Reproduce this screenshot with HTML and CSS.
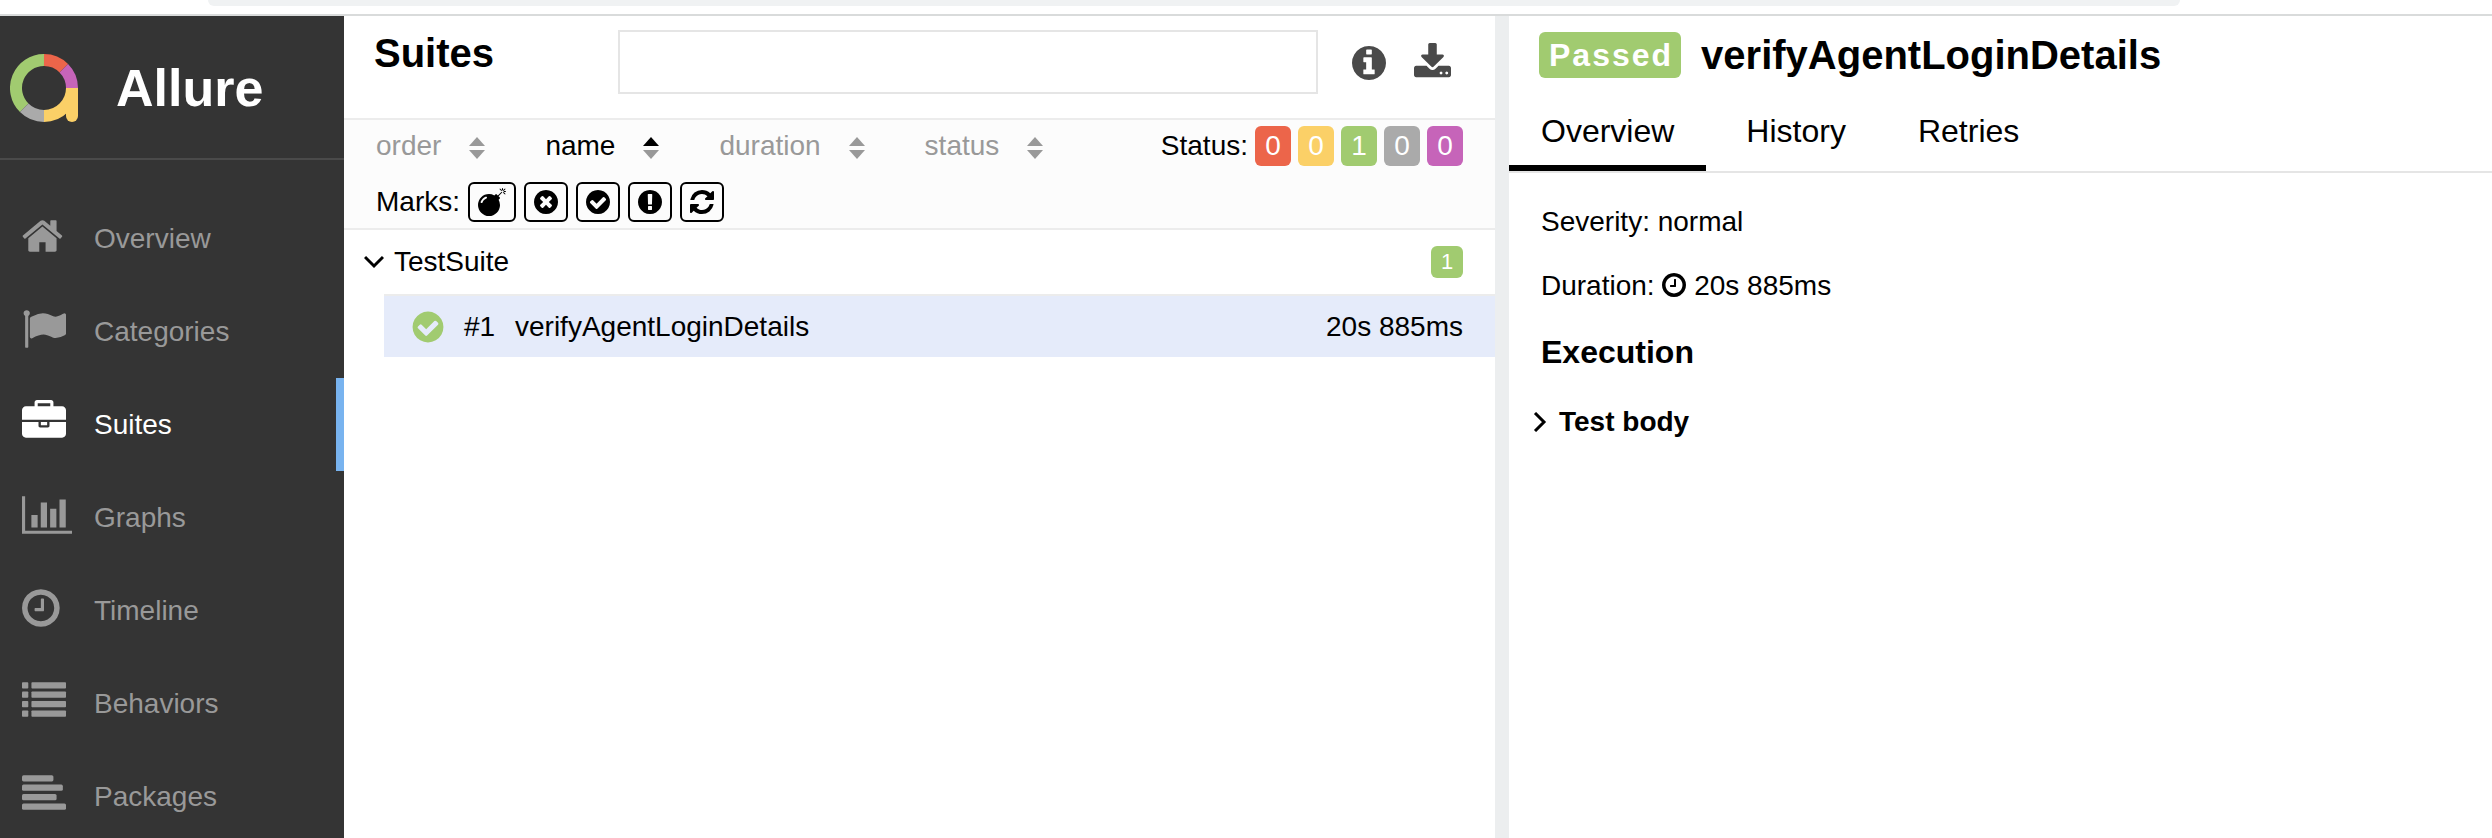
FILE: index.html
```html
<!DOCTYPE html>
<html lang="en">
<head>
  <meta charset="UTF-8" />
  <meta name="viewport" content="width=device-width, initial-scale=1" />
  <title>Allure Report</title>
  <link rel="stylesheet" href="styles.css">
</head>
<body>
  <svg class="sprite" aria-hidden="true">
    <symbol id="i-home" viewBox="64 0 1792 1792" preserveAspectRatio="xMinYMid"><path d="M1472 992v480q0 26-19 45t-45 19h-384v-384h-256v384h-384q-26 0-45-19t-19-45v-480q0-1 .5-3t.5-3l575-474 575 474q1 2 1 6zm223-69l-62 74q-8 9-21 11h-3q-13 0-21-7l-692-577-692 577q-12 8-24 7-13-2-21-11l-62-74q-8-10-7-23.5t11-21.5l719-599q32-26 76-26t76 26l244 204v-195q0-14 9-23t23-9h192q14 0 23 9t9 23v408l219 182q10 8 11 21.5t-7 23.5z"/></symbol>
    <symbol id="i-flag" viewBox="0 0 1792 1792" preserveAspectRatio="xMinYMid"><path d="M320 256q0 72-64 110v1266q0 13-9.5 22.5t-22.5 9.5h-64q-13 0-22.5-9.5t-9.5-22.5v-1266q-64-38-64-110 0-53 37.5-90.5t90.5-37.5 90.5 37.5 37.5 90.5zm1472 64v763q0 25-12.5 38.5t-39.5 27.5q-215 116-369 116-61 0-123.5-22t-108.5-48-115.5-48-142.5-22q-192 0-464 146-17 9-33 9-26 0-45-19t-19-45v-742q0-32 31-55 21-14 79-43 236-120 421-120 107 0 200 29t219 88q38 19 88 19 54 0 117.5-21t110-47 88-47 54.5-21q26 0 45 19t19 45z"/></symbol>
    <symbol id="i-briefcase" viewBox="0 0 1792 1792" preserveAspectRatio="xMinYMid"><path d="M640 256h512v-128h-512v128zm1152 640v480q0 66-47 113t-113 47h-1472q-66 0-113-47t-47-113v-480h672v160q0 26 19 45t45 19h320q26 0 45-19t19-45v-160h672zm-768 0v128h-256v-128h256zm768-480v384h-1792v-384q0-66 47-113t113-47h352v-160q0-40 28-68t68-28h576q40 0 68 28t28 68v160h352q66 0 113 47t47 113z"/></symbol>
    <symbol id="i-chart" viewBox="0 0 2048 1792" preserveAspectRatio="xMinYMid"><path d="M640 896v512h-256v-512h256zm384-512v1024h-256v-1024h256zm1024 1152v128h-2048v-1536h128v1408h1920zm-640-896v768h-256v-768h256zm384-384v1152h-256v-1152h256z"/></symbol>
    <symbol id="i-clock" viewBox="128 0 1536 1792" preserveAspectRatio="xMinYMid"><path d="M1024 544v448q0 14-9 23t-23 9h-320q-14 0-23-9t-9-23v-64q0-14 9-23t23-9h224v-352q0-14 9-23t23-9h64q14 0 23 9t9 23zm416 352q0-148-73-273t-198-198-273-73-273 73-198 198-73 273 73 273 198 198 273 73 273-73 198-198 73-273zm224 0q0 209-103 385.5t-279.5 279.5-385.5 103-385.5-103-279.5-279.5-103-385.5 103-385.5 279.5-279.5 385.5-103 385.5 103 279.5 279.5 103 385.5z"/></symbol>
    <symbol id="i-list" viewBox="0 0 1792 1792" preserveAspectRatio="xMinYMid">
      <rect x="0" y="128" width="256" height="256" rx="32"/><rect x="384" y="128" width="1408" height="256" rx="32"/>
      <rect x="0" y="512" width="256" height="256" rx="32"/><rect x="384" y="512" width="1408" height="256" rx="32"/>
      <rect x="0" y="896" width="256" height="256" rx="32"/><rect x="384" y="896" width="1408" height="256" rx="32"/>
      <rect x="0" y="1280" width="256" height="256" rx="32"/><rect x="384" y="1280" width="1408" height="256" rx="32"/>
    </symbol>
    <symbol id="i-align" viewBox="0 0 1792 1792" preserveAspectRatio="xMinYMid">
      <rect x="0" y="128" width="1280" height="256" rx="64"/>
      <rect x="0" y="512" width="1664" height="256" rx="64"/>
      <rect x="0" y="896" width="1408" height="256" rx="64"/>
      <rect x="0" y="1280" width="1792" height="256" rx="64"/>
    </symbol>
    <symbol id="i-info" viewBox="128 0 1536 1792"><path d="M1152 1376v-160q0-14-9-23t-23-9h-96v-512q0-14-9-23t-23-9h-320q-14 0-23 9t-9 23v160q0 14 9 23t23 9h96v320h-96q-14 0-23 9t-9 23v160q0 14 9 23t23 9h448q14 0 23-9t9-23zm-128-896v-160q0-14-9-23t-23-9h-192q-14 0-23 9t-9 23v160q0 14 9 23t23 9h192q14 0 23-9t9-23zm640 416q0 209-103 385.5t-279.5 279.5-385.5 103-385.5-103-279.5-279.5-103-385.5 103-385.5 279.5-279.5 385.5-103 385.5 103 279.5 279.5 103 385.5z"/></symbol>
    <symbol id="i-download" viewBox="64 0 1664 1792"><path d="M1344 1344q0-26-19-45t-45-19-45 19-19 45 19 45 45 19 45-19 19-45zm256 0q0-26-19-45t-45-19-45 19-19 45 19 45 45 19 45-19 19-45zm128-224v320q0 40-28 68t-68 28h-1472q-40 0-68-28t-28-68v-320q0-40 28-68t68-28h465l135 136q58 56 136 56t136-56l136-136h464q40 0 68 28t28 68zm-325-569q17 41-14 70l-448 448q-18 19-45 19t-45-19l-448-448q-31-29-14-70 17-39 59-39h256v-448q0-26 19-45t45-19h256q26 0 45 19t19 45v448h256q42 0 59 39z"/></symbol>
    <symbol id="i-bomb" viewBox="0 0 1792 1792"><path d="M571 589q-10-25-34-35t-49 0q-108 44-191 127t-127 191q-10 25 0 49t35 34q13 5 24 5 42 0 60-40 34-84 98.5-148.5t148.5-98.5q25-11 35-35t0-49zm942-356l46 46-244 243 68 68q19 19 19 45.5t-19 45.5l-64 64q89 161 89 343 0 143-55.5 273.5t-150 225-225 150-273.5 55.5-273.5-55.5-225-150-150-225-55.5-273.5 55.5-273.5 150-225 225-150 273.5-55.5q182 0 343 89l64-64q19-19 45.5-19t45.5 19l68 68zm8-56q-10 10-22 10-13 0-23-10l-91-90q-9-10-9-23t9-23q10-9 23-9t23 9l90 91q10 9 10 22.5t-10 22.5zm230 230q-11 9-23 9t-23-9l-90-91q-10-9-10-22.5t10-22.5q9-10 22.5-10t22.5 10l91 90q9 10 9 23t-9 23zm41-183q0 14-9 23t-23 9h-96q-14 0-23-9t-9-23 9-23 23-9h96q14 0 23 9t9 23zm-192-192v96q0 14-9 23t-23 9-23-9-9-23v-96q0-14 9-23t23-9 23 9 9 23zm151 55l-91 90q-10 10-22 10-13 0-23-10-10-9-10-22.5t10-22.5l90-91q10-9 23-9t23 9q9 10 9 23t-9 23z"/></symbol>
    <symbol id="i-times" viewBox="128 0 1536 1792"><path d="M1277 1122q0-26-19-45l-181-181 181-181q19-19 19-45 0-27-19-46l-90-90q-19-19-46-19-26 0-45 19l-181 181-181-181q-19-19-45-19-27 0-46 19l-90 90q-19 19-19 46 0 26 19 45l181 181-181 181q-19 19-19 45 0 27 19 46l90 90q19 19 46 19 26 0 45-19l181-181 181 181q19 19 45 19 27 0 46-19l90-90q19-19 19-46zm387-226q0 209-103 385.5t-279.5 279.5-385.5 103-385.5-103-279.5-279.5-103-385.5 103-385.5 279.5-279.5 385.5-103 385.5 103 279.5 279.5 103 385.5z"/></symbol>
    <symbol id="i-check" viewBox="128 0 1536 1792"><path d="M1412 734q0-28-18-46l-91-90q-19-19-45-19t-45 19l-408 407-226-226q-19-19-45-19t-45 19l-91 90q-18 18-18 46 0 27 18 45l362 362q19 19 45 19 27 0 46-19l543-543q18-18 18-45zm252 162q0 209-103 385.5t-279.5 279.5-385.5 103-385.5-103-279.5-279.5-103-385.5 103-385.5 279.5-279.5 385.5-103 385.5 103 279.5 279.5 103 385.5z"/></symbol>
    <symbol id="i-exclamation" viewBox="128 0 1536 1792"><path d="M896 128q209 0 385.5 103t279.5 279.5 103 385.5-103 385.5-279.5 279.5-385.5 103-385.5-103-279.5-279.5-103-385.5 103-385.5 279.5-279.5 385.5-103zm128 1247v-190q0-14-9-23.5t-22-9.5h-192q-13 0-23 10t-10 23v190q0 13 10 23t23 10h192q13 0 22-9.5t9-23.5zm-2-344l18-621q0-12-10-18-10-8-24-8h-220q-14 0-24 8-10 6-10 18l17 621q0 10 10 17.5t24 7.5h185q14 0 23.5-7.5t10.5-17.5z"/></symbol>
    <symbol id="i-refresh" viewBox="128 0 1536 1792"><path d="M1639 1056q0 5-1 7-64 268-268 434.5t-478 166.5q-146 0-282.5-55t-243.5-157l-129 129q-19 19-45 19t-45-19-19-45v-448q0-26 19-45t45-19h448q26 0 45 19t19 45-19 45l-137 137q71 66 161 102t187 36q134 0 250-65t186-179q11-17 53-117 8-23 30-23h192q13 0 22.5 9.5t9.5 22.5zm25-800v448q0 26-19 45t-45 19h-448q-26 0-45-19t-19-45 19-45l138-138q-148-137-349-137-134 0-250 65t-186 179q-11 17-53 117-8 23-30 23h-199q-13 0-22.5-9.5t-9.5-22.5v-7q65-268 270-434.5t480-166.5q146 0 284 55.5t245 156.5l130-129q19-19 45-19t45 19 19 45z"/></symbol>
    <symbol id="i-down" viewBox="0 0 20 14"><path d="M1 2l9 9 9-9" fill="none" stroke="currentColor" stroke-width="3"/></symbol>
    <symbol id="i-right" viewBox="0 0 14 20"><path d="M2 1l9 9-9 9" fill="none" stroke="currentColor" stroke-width="3"/></symbol>
  </svg>

  <div class="topbar"><div class="address"></div></div>

  <div class="app">
    <aside class="side-nav">
      <a class="brand" href="#">
        <svg class="logo" viewBox="0 0 68 68" stroke-width="12" aria-hidden="true">
          <path d="M34 6A28 28 0 0 0 14.2 53.8" stroke="#a1cb70"/>
          <path d="M14.2 53.8A28 28 0 0 0 34 62" stroke="#aaa"/>
          <path d="M34 62A28 28 0 0 0 62 34" stroke="#fbd067"/>
          <path d="M56 34h12v28a6 6 0 0 1-12 0z" fill="#fbd067" stroke="none"/>
          <path d="M34 6A28 28 0 0 1 53.8 14.2" stroke="#ec654a"/>
          <path d="M53.8 14.2A28 28 0 0 1 62 34" stroke="#c664b9"/>
        </svg>
        <span>Allure</span>
      </a>
      <nav class="menu">
        <a class="menu-item" href="#overview"><svg class="menu-icon"><use href="#i-home"/></svg>Overview</a>
        <a class="menu-item" href="#categories"><svg class="menu-icon"><use href="#i-flag"/></svg>Categories</a>
        <a class="menu-item active" href="#suites"><svg class="menu-icon"><use href="#i-briefcase"/></svg>Suites</a>
        <a class="menu-item" href="#graphs"><svg class="menu-icon"><use href="#i-chart"/></svg>Graphs</a>
        <a class="menu-item" href="#timeline"><svg class="menu-icon"><use href="#i-clock"/></svg>Timeline</a>
        <a class="menu-item" href="#behaviors"><svg class="menu-icon"><use href="#i-list"/></svg>Behaviors</a>
        <a class="menu-item" href="#packages"><svg class="menu-icon"><use href="#i-align"/></svg>Packages</a>
      </nav>
    </aside>

    <main class="pane">
      <header class="pane-header">
        <h1>Suites</h1>
        <input class="search" type="text" aria-label="Search">
        <div class="tools">
          <button class="tool" aria-label="Info"><svg class="icon-info"><use href="#i-info"/></svg></button>
          <button class="tool" aria-label="Download CSV"><svg class="icon-download"><use href="#i-download"/></svg></button>
        </div>
      </header>

      <section class="filters">
        <div class="filter-row">
          <div class="sorters">
            <button class="sorter">order<svg class="sort" viewBox="0 0 16 22"><path d="M0 9l8-9 8 9z"/><path d="M0 13h16l-8 9z"/></svg></button>
            <button class="sorter sorted">name<svg class="sort" viewBox="0 0 16 22"><path class="asc" d="M0 9l8-9 8 9z"/><path d="M0 13h16l-8 9z"/></svg></button>
            <button class="sorter">duration<svg class="sort" viewBox="0 0 16 22"><path d="M0 9l8-9 8 9z"/><path d="M0 13h16l-8 9z"/></svg></button>
            <button class="sorter">status<svg class="sort" viewBox="0 0 16 22"><path d="M0 9l8-9 8 9z"/><path d="M0 13h16l-8 9z"/></svg></button>
          </div>
          <div class="statuses">
            <span>Status:</span>
            <button class="chip failed">0</button>
            <button class="chip broken">0</button>
            <button class="chip passed">1</button>
            <button class="chip skipped">0</button>
            <button class="chip unknown">0</button>
          </div>
        </div>
        <div class="marks">
          <span>Marks:</span>
          <button class="mark" aria-label="Flaky"><svg class="icon-bomb"><use href="#i-bomb"/></svg></button>
          <button class="mark" aria-label="New failed"><svg><use href="#i-times"/></svg></button>
          <button class="mark" aria-label="New passed"><svg><use href="#i-check"/></svg></button>
          <button class="mark" aria-label="New broken"><svg><use href="#i-exclamation"/></svg></button>
          <button class="mark" aria-label="Retries"><svg><use href="#i-refresh"/></svg></button>
        </div>
      </section>

      <div class="tree">
        <div class="node">
          <svg class="arrow-down"><use href="#i-down"/></svg>
          <span class="node-name">TestSuite</span>
          <span class="count passed">1</span>
        </div>
        <a class="leaf" href="#verifyAgentLoginDetails">
          <svg class="leaf-icon"><use href="#i-check"/></svg>
          <span class="leaf-order">#1</span>
          <span class="leaf-name">verifyAgentLoginDetails</span>
          <span>20s 885ms</span>
        </a>
      </div>
    </main>

    <div class="gutter"></div>

    <section class="details">
      <h2 class="test-title"><span class="label passed">Passed</span>verifyAgentLoginDetails</h2>
      <nav class="tabs">
        <a class="tab active" href="#tab-overview">Overview</a>
        <a class="tab" href="#tab-history">History</a>
        <a class="tab" href="#tab-retries">Retries</a>
      </nav>
      <div class="details-body">
        <p>Severity: normal</p>
        <p>Duration: <svg class="icon-clock"><use href="#i-clock"/></svg> 20s 885ms</p>
        <h3>Execution</h3>
        <button class="stage"><svg class="arrow-right"><use href="#i-right"/></svg>Test body</button>
      </div>
    </section>
  </div>
</body>
</html>
```
FILE: styles.css
```css
:root {
  --dark: #343434;
  --line: #ececec;
  --muted: #999;
  --failed: #ec654a;
  --broken: #fbd067;
  --passed: #a1cb70;
  --skipped: #aaa;
  --unknown: #c664b9;
}

* {
  box-sizing: border-box;
  margin: 0;
  padding: 0;
}

body {
  display: flex;
  flex-direction: column;
  height: 100vh;
  overflow: hidden;
  font: 28px/40px "Liberation Sans", Arial, sans-serif;
  color: #000;
  background: #fff;
}

a {
  color: inherit;
  text-decoration: none;
}

button {
  font: inherit;
  color: inherit;
  background: none;
  border: 0;
  cursor: pointer;
}

svg {
  display: block;
  flex-shrink: 0;
  fill: currentColor;
}

.sprite {
  display: none;
}

/* bottom edge of the browser toolbar */
.topbar {
  flex-shrink: 0;
  height: 16px;
  padding: 0 312px 0 208px;
  border-bottom: 2px solid #d9dbdb;
}

.address {
  height: 6px;
  background: #f0f2f3;
  border-radius: 0 0 24px 24px;
}

.app {
  flex: 1;
  min-height: 0;
  display: grid;
  grid-template-columns: 344px 1151fr 14px 983fr;
}

/* side navigation */
.side-nav {
  min-height: 0;
  overflow: hidden;
  color: var(--muted);
  background: var(--dark);
}

.brand {
  display: flex;
  align-items: center;
  gap: 38px;
  height: 144px;
  padding: 2px 0 0 10px;
  font-size: 52px;
  font-weight: bold;
  color: #fff;
  border-bottom: 2px solid #4a4a4a;
}

.logo {
  width: 68px;
  height: 68px;
  fill: none;
}

.menu {
  padding-top: 32px;
}

.menu-item {
  display: flex;
  align-items: center;
  height: 93px;
  padding-left: 22px;
  border-right: 8px solid transparent;
}

.menu-item.active {
  color: #fff;
  border-color: #78b3ef;
}

.menu-icon {
  width: 50px;
  height: 44px;
  margin: 0 22px 6px 0;
}

/* suites pane */
.pane {
  min-width: 0;
}

.pane-header {
  display: flex;
  padding: 14px 44px 24px 30px;
  border-bottom: 2px solid var(--line);
}

h1 {
  width: 244px;
  font-size: 40px;
  line-height: 46px;
}

.search {
  flex: 1;
  min-width: 0;
  height: 64px;
  padding: 0 16px;
  font: inherit;
  border: 2px solid #e5e5e5;
}

.tools {
  display: flex;
  align-items: center;
  gap: 28px;
  margin-left: 34px;
  padding-top: 2px;
  color: #4a4a4a;
}

.icon-info {
  width: 34px;
  height: 40px;
}

.icon-download {
  width: 37px;
  height: 40px;
}

.filters {
  display: flex;
  flex-direction: column;
  gap: 16px;
  padding: 6px 32px;
  background: #fcfcfc;
  border-bottom: 2px solid var(--line);
}

.filter-row {
  display: flex;
  justify-content: space-between;
}

.sorters {
  display: flex;
  gap: 60px;
}

.sorter {
  display: flex;
  align-items: center;
  gap: 28px;
  color: var(--muted);
}

.sorter.sorted {
  color: #000;
}

.sort {
  width: 16px;
  height: 22px;
  margin-top: 4px;
  fill: var(--muted);
}

.sort .asc {
  fill: #000;
}

.statuses {
  display: flex;
  gap: 7px;
}

.chip {
  width: 36px;
  height: 40px;
  color: #fff;
  border-radius: 6px;
}

.failed {
  background: var(--failed);
}

.broken {
  background: var(--broken);
}

.passed {
  background: var(--passed);
}

.skipped {
  background: var(--skipped);
}

.unknown {
  background: var(--unknown);
}

.marks {
  display: flex;
  gap: 8px;
}

.mark {
  padding: 4px 8px;
  border: 2px solid #000;
  border-radius: 6px;
}

.mark svg {
  width: 24px;
  height: 28px;
}

.mark .icon-bomb {
  width: 28px;
}

.node {
  display: flex;
  align-items: center;
  height: 64px;
  padding: 0 32px 0 20px;
}

.arrow-down {
  width: 20px;
  height: 14px;
  margin-right: 10px;
}

.node-name {
  flex: 1;
}

.count {
  width: 32px;
  font-size: 22px;
  line-height: 32px;
  text-align: center;
  color: #fff;
  border-radius: 6px;
}

.leaf {
  display: flex;
  align-items: center;
  height: 63px;
  margin-left: 40px;
  padding: 0 32px 0 28px;
  background: #e5ebfa;
  border-top: 2px solid #ececec;
}

.leaf-icon {
  width: 32px;
  height: 36px;
  margin-right: 20px;
  color: var(--passed);
}

.leaf-order {
  width: 51px;
}

.leaf-name {
  flex: 1;
}

.gutter {
  background: #eceeef;
}

/* test details */
.details {
  min-width: 0;
}

.test-title {
  display: flex;
  align-items: center;
  gap: 20px;
  padding: 16px 30px 0;
  font-size: 40px;
  line-height: 46px;
}

.label {
  padding: 0 8px 0 10px;
  font-size: 32px;
  line-height: 46px;
  letter-spacing: 2px;
  color: #fff;
  border-radius: 6px;
}

.tabs {
  display: flex;
  gap: 8px;
  padding-top: 29px;
  font-size: 32px;
  line-height: 48px;
  border-bottom: 2px solid #e5e5e5;
}

.tab {
  padding: 0 32px 10px;
  border-bottom: 6px solid transparent;
}

.tab.active {
  border-color: #000;
}

.details-body {
  display: flex;
  flex-direction: column;
  align-items: flex-start;
  gap: 24px;
  padding: 29px 32px;
}

.icon-clock {
  display: inline-block;
  width: 24px;
  height: 28px;
  vertical-align: -4px;
}

h3 {
  font-size: 32px;
  line-height: 44px;
}

.stage {
  display: flex;
  align-items: center;
  gap: 12px;
  margin: 4px 0 0 -8px;
  font-weight: bold;
}

.arrow-right {
  width: 14px;
  height: 20px;
}
```
